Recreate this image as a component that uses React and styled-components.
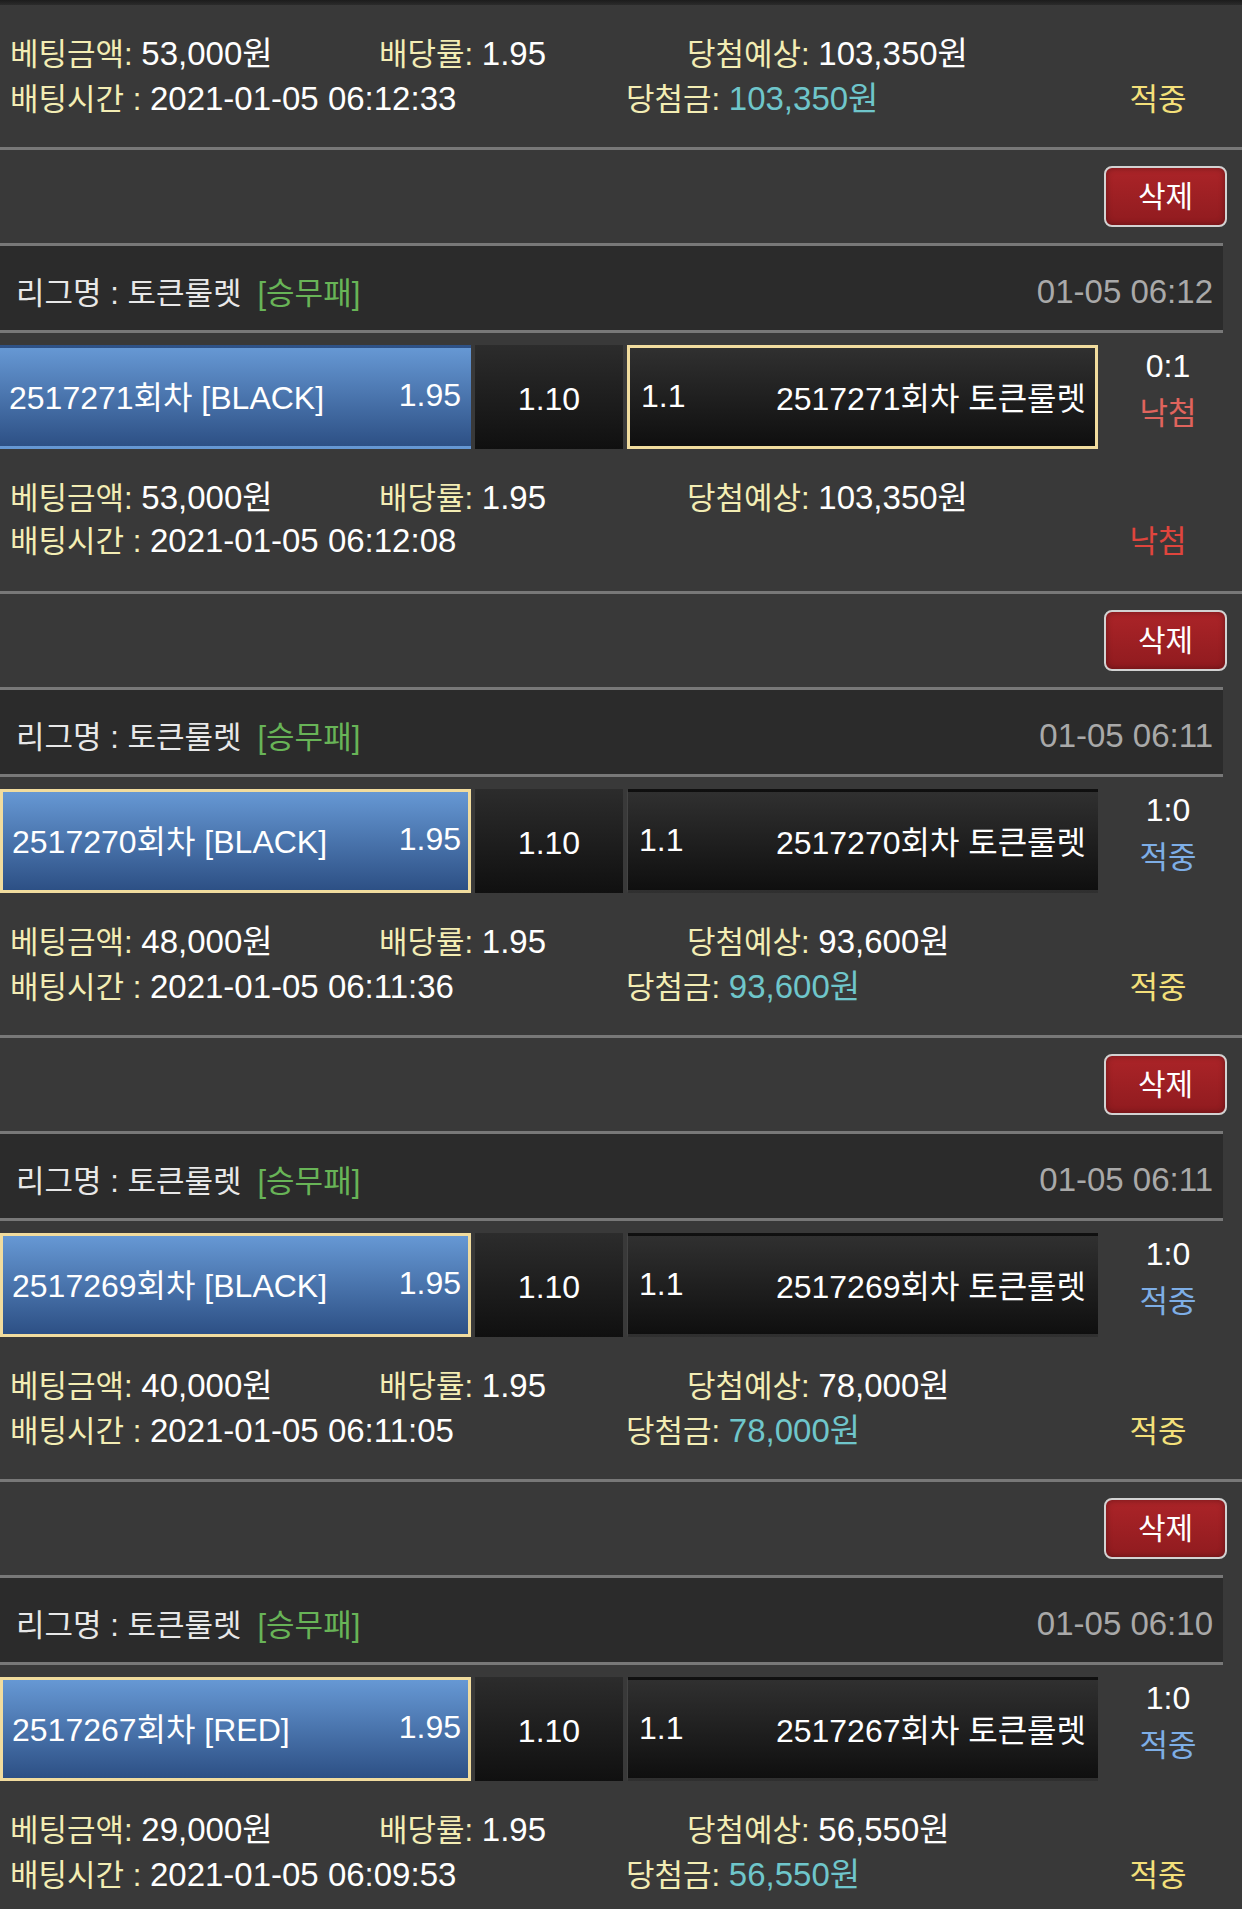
import React from "react";
import styled, { createGlobalStyle } from "styled-components";

const Global = createGlobalStyle`
  * { box-sizing: border-box; }
  html, body { margin: 0; padding: 0; background: #393939; }
  body {
    font-family: "Liberation Sans", Arial, "Noto Sans CJK KR", sans-serif;
    color: #ffffff;
    overflow: hidden;
  }
`;

const Page = styled.div`
  width: 1242px;
  height: 1909px;
  overflow: hidden;
  background: #393939;
`;

const TopEdge = styled.div`
  height: 5px;
  background: linear-gradient(#1c1c1c, #2b2b2b);
`;

const Block = styled.section`
  border-top: 3px solid #787878;
`;

const ActionBar = styled.div`
  height: 93px;
  display: flex;
  align-items: center;
  justify-content: flex-end;
  padding-right: 15px;
`;

const DeleteButton = styled.button`
  width: 123px;
  height: 61px;
  padding: 0;
  border: 2px solid #d2d2d2;
  border-radius: 8px;
  background: linear-gradient(#ab2428, #901b1f);
  box-shadow: inset 0 0 6px rgba(0, 0, 0, 0.35);
  color: #ffffff;
  font-family: "Liberation Sans", "Noto Sans CJK KR", sans-serif;
  font-size: 30px;
  line-height: 1;
`;

const LeagueBar = styled.div`
  width: 1223px;
  height: 90px;
  border-top: 3px solid #787878;
  border-bottom: 3px solid #787878;
  background: #2b2b2b;
  display: flex;
  align-items: center;
  justify-content: space-between;
  padding: 4px 10px 0 16px;
  font-size: 31px;
  white-space: nowrap;
`;

const LeagueName = styled.span`
  color: #e8e8e8;
`;

const GameType = styled.span`
  color: #68b457;
  margin-left: 16px;
`;

const LeagueDate = styled.span`
  color: #a9a9a9;
  font-size: 33px;
  padding-top: 4px;
`;

const BetRow = styled.div`
  margin-top: 12px;
  height: 104px;
  display: flex;
  gap: 4px;
  font-size: 32px;
  white-space: nowrap;
`;

const Pick = styled.div`
  width: 471px;
  display: flex;
  align-items: center;
  justify-content: space-between;
  padding: 0 7px 4px 9px;
  background: linear-gradient(#6698d4, #2d5085);
  border: 3px solid ${(p) => (p.$selected ? "#f1dc9e" : "transparent")};
  border-left-width: ${(p) => (p.$selected ? "3px" : "0")};
`;

const OddsCell = styled.div`
  width: 148px;
  display: flex;
  align-items: center;
  justify-content: center;
  padding-top: 4px;
  background: linear-gradient(#2c2c2c, #101010);
`;

const EventCell = styled.div`
  width: 471px;
  display: flex;
  align-items: center;
  justify-content: space-between;
  padding: 0 9px 2px 11px;
  background: linear-gradient(#303030, #0f0f0f);
  border: 3px solid ${(p) => (p.$selected ? "#f1dc9e" : "transparent")};
  border-left: ${(p) => (p.$selected ? "3px solid #f1dc9e" : "1px solid #444")};
`;

const ScoreCol = styled.div`
  flex: 1;
  display: flex;
  flex-direction: column;
  align-items: center;
  padding: 1px 8px 0 0;
`;

const Score = styled.div`
  line-height: 40px;
  color: #ffffff;
`;

const ScoreResult = styled.div`
  line-height: 56px;
  font-size: 31px;
  color: ${(p) => (p.$hit ? "#7eaee6" : "#e0645d")};
`;

const Info = styled.div`
  padding: 22px 28px 30px 10px;
  display: flex;
  flex-direction: column;
  font-size: 31px;
  white-space: nowrap;
`;

const InfoLine = styled.div`
  height: 45px;
  display: grid;
  grid-template-columns: ${(p) => p.$cols};
  align-items: center;
`;

const Label = styled.span`
  color: #f3edb4;
`;

const Value = styled.span`
  font-size: 33px;
  color: ${(p) => (p.$paid ? "#6fc6cb" : "#ffffff")};
`;

const Verdict = styled.span`
  text-align: center;
  color: ${(p) => (p.$hit ? "#f4e07a" : "#e0453d")};
`;

function InfoSection({ amount, expected, time, payout, hit }) {
  return (
    <Info>
      <InfoLine $cols="369px 308px 1fr">
        <span>
          <Label>베팅금액: </Label>
          <Value>{amount}원</Value>
        </span>
        <span>
          <Label>배당률: </Label>
          <Value>1.95</Value>
        </span>
        <span>
          <Label>당첨예상: </Label>
          <Value>{expected}원</Value>
        </span>
      </InfoLine>
      <InfoLine $cols="616px 1fr 112px">
        <span>
          <Label>배팅시간 : </Label>
          <Value>{time}</Value>
        </span>
        <span>
          {payout && (
            <>
              <Label>당첨금: </Label>
              <Value $paid>{payout}원</Value>
            </>
          )}
        </span>
        <Verdict $hit={hit}>{hit ? "적중" : "낙첨"}</Verdict>
      </InfoLine>
    </Info>
  );
}

const bets = [
  {
    round: "2517271",
    date: "01-05 06:12",
    color: "BLACK",
    score: "0:1",
    hit: false,
    pickSelected: false,
    amount: "53,000",
    expected: "103,350",
    time: "2021-01-05 06:12:08",
    payout: null,
  },
  {
    round: "2517270",
    date: "01-05 06:11",
    color: "BLACK",
    score: "1:0",
    hit: true,
    pickSelected: true,
    amount: "48,000",
    expected: "93,600",
    time: "2021-01-05 06:11:36",
    payout: "93,600",
  },
  {
    round: "2517269",
    date: "01-05 06:11",
    color: "BLACK",
    score: "1:0",
    hit: true,
    pickSelected: true,
    amount: "40,000",
    expected: "78,000",
    time: "2021-01-05 06:11:05",
    payout: "78,000",
  },
  {
    round: "2517267",
    date: "01-05 06:10",
    color: "RED",
    score: "1:0",
    hit: true,
    pickSelected: true,
    amount: "29,000",
    expected: "56,550",
    time: "2021-01-05 06:09:53",
    payout: "56,550",
  },
];

function BetBlock({ bet }) {
  return (
    <Block>
      <ActionBar>
        <DeleteButton>삭제</DeleteButton>
      </ActionBar>
      <LeagueBar>
        <span>
          <LeagueName>리그명 : 토큰룰렛</LeagueName>
          <GameType>[승무패]</GameType>
        </span>
        <LeagueDate>{bet.date}</LeagueDate>
      </LeagueBar>
      <BetRow>
        <Pick $selected={bet.pickSelected}>
          <span>
            {bet.round}회차 [{bet.color}]
          </span>
          <span>1.95</span>
        </Pick>
        <OddsCell>1.10</OddsCell>
        <EventCell $selected={!bet.pickSelected}>
          <span>1.1</span>
          <span>{bet.round}회차 토큰룰렛</span>
        </EventCell>
        <ScoreCol>
          <Score>{bet.score}</Score>
          <ScoreResult $hit={bet.hit}>{bet.hit ? "적중" : "낙첨"}</ScoreResult>
        </ScoreCol>
      </BetRow>
      <InfoSection
        amount={bet.amount}
        expected={bet.expected}
        time={bet.time}
        payout={bet.payout}
        hit={bet.hit}
      />
    </Block>
  );
}

export default function App() {
  return (
    <Page>
      <Global />
      <TopEdge />
      <InfoSection
        amount="53,000"
        expected="103,350"
        time="2021-01-05 06:12:33"
        payout="103,350"
        hit
      />
      {bets.map((bet) => (
        <BetBlock key={bet.round} bet={bet} />
      ))}
    </Page>
  );
}
